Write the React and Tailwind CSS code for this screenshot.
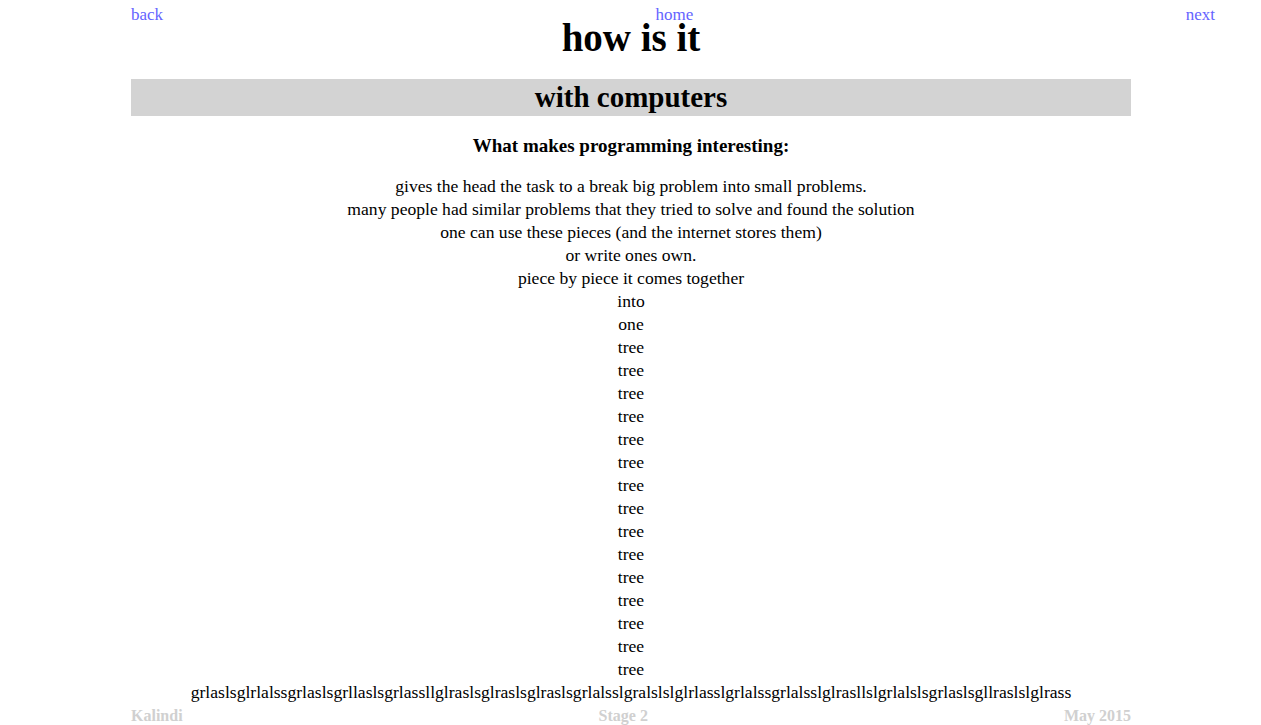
const lines = [
  "gives the head the task to a break big problem into small problems.",
  "many people had similar problems that they tried to solve and found the solution",
  "one can use these pieces (and the internet stores them)",
  "or write ones own.",
  "piece by piece it comes together",
  "into",
  "one",
];

const trees = Array.from({ length: 15 });

export default function App() {
  return (
    <div className="bg-white text-black font-['Liberation_Serif',Georgia,serif] h-[725px] overflow-hidden">
      <nav className="ml-[131px] w-[1084px] flex justify-between text-[17px] leading-[20px] pt-[5px] text-[#6464ff]">
        <a href="#">back</a>
        <a href="#">home</a>
        <a href="#">next</a>
      </nav>
      <div className="ml-[131px] w-[1000px]">
        <h1 className="text-center font-bold text-[39px] leading-[30px] -mt-[2px]">how is it</h1>
        <h2 className="mt-[26px] bg-[#d3d3d3] h-[37px] flex items-center justify-center font-bold text-[29px]">
          with computers
        </h2>
        <p className="text-center font-bold text-[19px] mt-[18px] leading-[24px]">
          What makes programming interesting:
        </p>
        <div className="text-center text-[17.6px] leading-[23px] mt-[17px]">
          {lines.map((l, i) => (
            <div key={i}>{l}</div>
          ))}
          {trees.map((_, i) => (
            <div key={i}>tree</div>
          ))}
          <div>grlaslsglrlalssgrlaslsgrllaslsgrlassllglraslsglraslsglraslsgrlalsslgralslslglrlasslgrlalssgrlalsslglrasllslgrlalslsgrlaslsgllraslslglrass</div>
        </div>
        <footer className="mt-[2px] flex justify-between font-bold text-[16px] leading-[20px] text-[#d0d0d0]">
          <span>Kalindi</span>
          <span>Stage 2</span>
          <span>May 2015</span>
        </footer>
      </div>
    </div>
  );
}
